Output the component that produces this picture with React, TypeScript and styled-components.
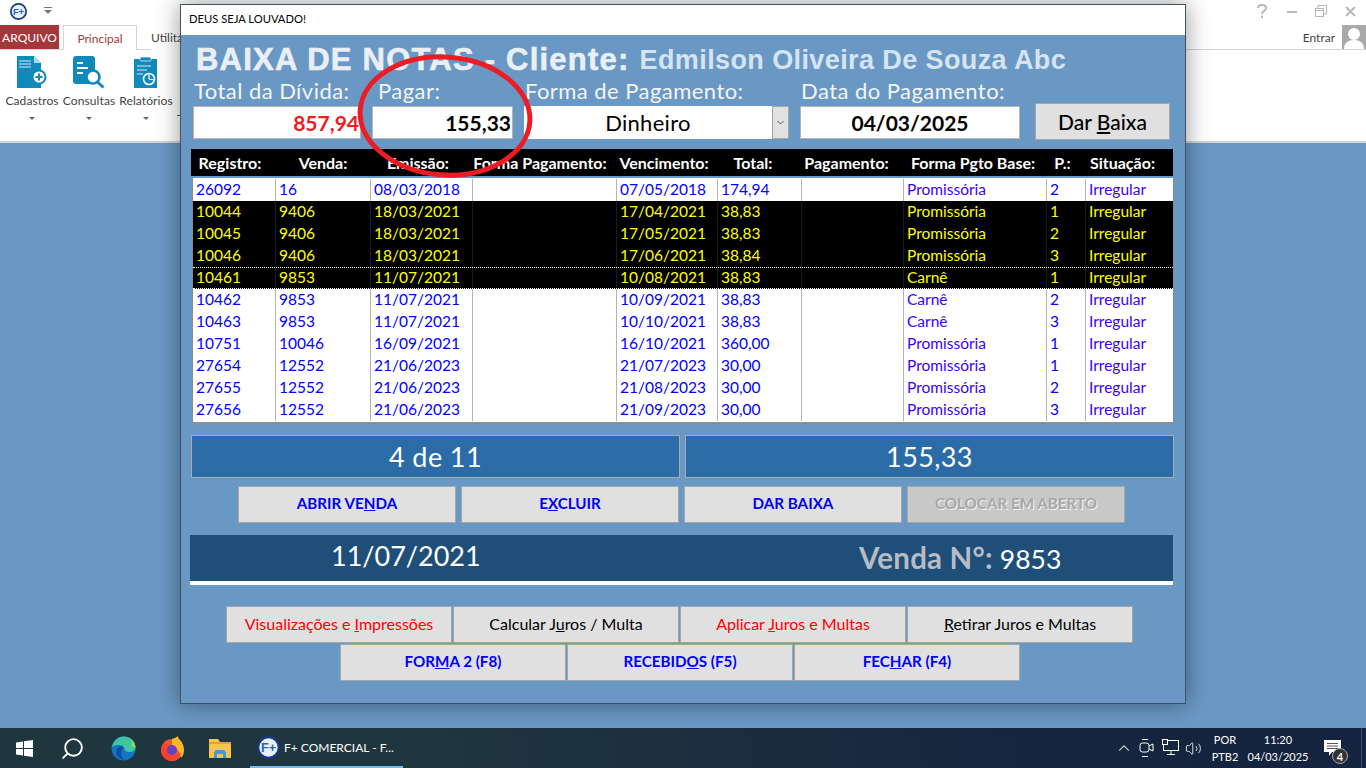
import React from 'react';
import styled, { createGlobalStyle } from 'styled-components';
import { ChevronUp, Search, Volume2 } from 'lucide-react';

const UI = '"Lato", "Open Sans", sans-serif';
const ARIAL = '"Liberation Sans", Arial, sans-serif';

const Global = createGlobalStyle`
	html, body {
		margin: 0;
		padding: 0;
		background: #6a98c4;
		font-family: ${UI};
	}
	* {
		box-sizing: border-box;
	}
`;

const Screen = styled.div`
	position: relative;
	width: 1366px;
	height: 768px;
	overflow: hidden;
	display: flex;
	flex-direction: column;
	background: #6a98c4;
`;

/* ---------- ribbon ---------- */

const Ribbon = styled.header`
	height: 143px;
	background: #fff;
	border-bottom: 2px solid #d4d4d4;
	display: flex;
	flex-direction: column;
`;

const QuickBar = styled.div`
	height: 25px;
	display: flex;
	align-items: center;
	padding: 0 6px 3px 10px;
	gap: 17px;
`;

const WindowGlyphs = styled.div`
	margin-left: auto;
	display: flex;
	align-items: center;
	gap: 18px;
	padding-right: 4px;
	color: #b8b8b8;
`;

const TabRow = styled.div`
	height: 25px;
	display: flex;
	border-bottom: 1px solid #d4d4d4;
`;

const FileTab = styled.div`
	width: 59px;
	background: #a4373a;
	color: #fff;
	font-size: 12px;
	display: flex;
	align-items: center;
	justify-content: center;
`;

const Tab = styled.div<{ $active?: boolean }>`
	width: ${({ $active }) => ($active ? '74px' : '60px')};
	height: 25px;
	margin-left: ${({ $active }) => ($active ? '4px' : '14px')};
	font-size: 12px;
	display: flex;
	align-items: center;
	justify-content: ${({ $active }) => ($active ? 'center' : 'flex-start')};
	color: ${({ $active }) => ($active ? '#a4373a' : '#444')};
	background: #fff;
	border: ${({ $active }) => ($active ? '1px solid #d4d4d4' : 'none')};
	border-bottom: none;
`;

const Account = styled.div`
	margin-left: auto;
	display: flex;
	align-items: center;
	gap: 7px;
	font-size: 12px;
	color: #444;
`;

const Avatar = styled.div`
	width: 24px;
	height: 24px;
	background: #a9a9a9;
`;

const Tools = styled.div`
	display: flex;
	padding: 5px 0 0 6px;
	gap: 5px;
`;

const Tool = styled.div`
	width: 52px;
	display: flex;
	flex-direction: column;
	align-items: center;
	font-size: 12px;
	letter-spacing: 0.1px;
	color: #444;
	white-space: nowrap;
`;

const ToolIcon = styled.div`
	height: 35px;
	display: flex;
	align-items: center;
	margin-bottom: 3px;
`;

const Caret = styled.span`
	width: 0;
	height: 0;
	margin-top: 9px;
	border-left: 3px solid transparent;
	border-right: 3px solid transparent;
	border-top: 3px solid #666;
`;

const SideTick = styled.span`
	width: 3px;
	height: 1px;
	margin-top: 60px;
	background: #555;
`;

/* ---------- desktop + taskbar ---------- */

const Desktop = styled.main`
	flex: 1;
`;

const Taskbar = styled.footer`
	height: 40px;
	display: flex;
	align-items: center;
	color: #fff;
	background: linear-gradient(90deg, #20363f 0%, #20363f 30%, #15263f 75%, #14233f 100%);
`;

const TaskSlot = styled.div<{ $w: number }>`
	width: ${({ $w }) => $w}px;
	height: 40px;
	display: flex;
	align-items: center;
	justify-content: center;
`;

const ActiveApp = styled.div`
	width: 153px;
	height: 40px;
	margin-left: 4px;
	display: flex;
	align-items: center;
	gap: 4px;
	padding-left: 7px;
	font-size: 12px;
	white-space: nowrap;
	border-bottom: 2px solid #76b9ed;
`;

const Tray = styled.div`
	margin-left: auto;
	display: flex;
	align-items: center;
	height: 40px;
	color: #fff;
`;

const TrayIcon = styled.div<{ $w: number }>`
	width: ${({ $w }) => $w}px;
	display: flex;
	justify-content: center;
`;

const TrayText = styled.div<{ $w: number; $pad?: number }>`
	width: ${({ $w }) => $w}px;
	padding-left: ${({ $pad }) => $pad || 0}px;
	display: flex;
	flex-direction: column;
	align-items: center;
	font-size: 11px;
	line-height: 17px;
`;

const Notify = styled.div`
	position: relative;
	width: 46px;
	height: 40px;
	padding-right: 12px;
	display: flex;
	align-items: center;
	justify-content: center;
	border-right: 1px solid #3b4a5c;
	margin-right: 4px;
`;

const Badge = styled.span`
	position: absolute;
	left: 16px;
	top: 20px;
	width: 16px;
	height: 16px;
	border-radius: 50%;
	background: #333;
	border: 1px solid #aaa;
	font-size: 11px;
	font-weight: 700;
	display: flex;
	align-items: center;
	justify-content: center;
`;

/* ---------- dialog ---------- */

const Dialog = styled.section`
	position: absolute;
	left: 180px;
	top: 4px;
	width: 1006px;
	height: 700px;
	display: flex;
	flex-direction: column;
	border: 1px solid #3f5266;
	background: #6a98c4;
	box-shadow: 0 0 22px rgba(0, 0, 0, 0.42);
`;

const TitleBar = styled.div`
	height: 30px;
	flex: none;
	background: #fff;
	color: #000;
	font-size: 11.2px;
	display: flex;
	align-items: center;
	padding: 0 0 3px 8px;
`;

const Body = styled.div`
	flex: 1;
	display: flex;
	flex-direction: column;
	align-items: stretch;
	padding: 0 12px 0 9px;
`;

const Heading = styled.div`
	height: 45px;
	padding: 5px 0 0 6px;
	display: flex;
	align-items: center;
	gap: 10px;
	font-family: ${ARIAL};
	font-weight: 700;
	white-space: nowrap;
`;

const HeadingMain = styled.span`
	font-size: 31px;
	letter-spacing: 1.22px;
	color: #eaeff6;
	-webkit-text-stroke: 0.6px #eaeff6;
`;

const HeadingClient = styled.span`
	font-size: 27px;
	letter-spacing: 0.4px;
	color: #d6e4f1;
`;

const FormRow = styled.div`
	height: 59px;
	display: flex;
	align-items: flex-end;
	padding-left: 3px;
`;

const Field = styled.div<{ $w: number; $gap: number }>`
	width: ${({ $w }) => $w}px;
	margin-right: ${({ $gap }) => $gap}px;
	display: flex;
	flex-direction: column;
`;

const FieldLabel = styled.label<{ $indent?: number }>`
	height: 26px;
	padding-left: ${({ $indent }) => $indent || 1}px;
	font-size: 22px;
	line-height: 22px;
	letter-spacing: 0.45px;
	color: #f2f5f8;
	white-space: nowrap;
`;

const TextBox = styled.div<{ $color?: string; $align?: string }>`
	height: 33px;
	padding: 0 1px;
	background: #fff;
	border: 1px solid #b5b5b5;
	display: flex;
	align-items: center;
	justify-content: ${({ $align }) => $align || 'flex-end'};
	font-size: 21px;
	font-weight: 700;
	color: ${({ $color }) => $color || '#000'};
`;

const ComboBox = styled.div`
	height: 33px;
	display: flex;
	background: #fff;
`;

const ComboValue = styled.div`
	flex: 1;
	display: flex;
	align-items: center;
	justify-content: center;
	font-size: 22px;
	letter-spacing: 0.3px;
	color: #000;
`;

const ComboArrow = styled.div`
	width: 17px;
	background: #e1e1e1;
	border: 1px solid #a6a6a6;
	display: flex;
	align-items: center;
	justify-content: center;
`;

const BaixaButton = styled.button`
	width: 135px;
	height: 37px;
	margin-bottom: -1px;
	background: #e0e0e0;
	border: 1px solid #a6a6a6;
	font-family: ${UI};
	font-size: 21px;
	font-weight: 500;
	color: #000;
	padding: 0;
`;

const COLUMNS = '83px 95px 102px 144px 101px 84px 102px 143px 39px 89px';

const HeaderRow = styled.div`
	height: 27px;
	margin-top: 10px;
	margin-left: 1px;
	background: #000;
	display: grid;
	grid-template-columns: 76px 110px 80px 164px 84px 94px 93px 160px 19px 101px;
	align-items: center;
	justify-items: center;
	padding-left: 1px;
`;

const HeaderCell = styled.div`
	font-size: 16px;
	font-weight: 700;
	color: #fff;
	white-space: nowrap;
`;

const Grid = styled.div`
	margin: 2px 0 0 2px;
	width: 982px;
	height: 246px;
	background: #fff;
	border-bottom: 2px solid #8f8f8f;
	border-right: 1px solid #8a8a8a;
	border-left: 1px solid #8a8a8a;
	padding-top: 1px;
`;

const Row = styled.div<{ $dark?: boolean; $current?: boolean }>`
	height: 22px;
	display: grid;
	grid-template-columns: ${COLUMNS};
	background: ${({ $dark }) => ($dark ? '#000' : '#fff')};
	border-top: ${({ $current }) => ($current ? '1px dotted #fff' : 'none')};
	border-bottom: ${({ $current }) => ($current ? '1px dotted #fff' : 'none')};
`;

const Cell = styled.div<{ $dark?: boolean; $violet?: boolean; $current?: boolean }>`
	padding-left: 3px;
	font-size: 15.5px;
	line-height: ${({ $current }) => ($current ? '18px' : '20px')};
	white-space: nowrap;
	color: ${({ $dark, $violet }) => ($dark ? '#ffff00' : $violet ? '#3a00ff' : '#0000ff')};
	border-right: 1px solid ${({ $dark }) => ($dark ? '#1c1c1c' : '#b5b5b5')};

	&:last-child {
		border-right: none;
	}
`;

const InfoRow = styled.div`
	margin-top: 11px;
	margin-left: 1px;
	display: grid;
	grid-template-columns: 489px 489px;
	gap: 5px;
`;

const InfoBox = styled.div`
	height: 43px;
	background: #2b6ca8;
	border: 1px solid #a3adb8;
	display: flex;
	align-items: center;
	justify-content: center;
	font-size: 27px;
	letter-spacing: 0.4px;
	color: #fff;
`;

const ButtonRow = styled.div<{ $top: number; $gap: number; $w: number; $nudge?: number }>`
	margin-top: ${({ $top }) => $top}px;
	padding-right: ${({ $nudge }) => $nudge || 0}px;
	display: grid;
	grid-template-columns: repeat(auto-fit, ${({ $w }) => $w}px);
	justify-content: center;
	gap: ${({ $gap }) => $gap}px;
`;

const ActionButton = styled.button<{ $tone?: 'blue' | 'red' | 'black'; $bold?: boolean; $disabled?: boolean }>`
	height: 37px;
	padding: 0 0 3px;
	border: 1px solid #a6a6a6;
	background: ${({ $disabled }) => ($disabled ? '#c8c8c8' : '#e0e0e0')};
	font-family: ${UI};
	font-size: ${({ $bold }) => ($bold ? '15.2px' : '16px')};
	font-weight: ${({ $bold }) => ($bold ? 700 : 400)};
	white-space: nowrap;
	color: ${({ $tone, $disabled }) =>
		$disabled ? '#a8a8a8' : $tone === 'red' ? '#ff0000' : $tone === 'black' ? '#000' : '#0000ff'};
	text-shadow: ${({ $disabled }) => ($disabled ? '1px 1px 0 #f2f2f2' : 'none')};
`;

const SaleBand = styled.div`
	height: 50px;
	margin-top: 12px;
	background: #1f4e79;
	border-bottom: 4px solid #fff;
	display: flex;
	align-items: center;
	color: #fff;
`;

const SaleDate = styled.div`
	width: 140px;
	margin-left: 141px;
	font-size: 27px;
	white-space: nowrap;
	margin-top: -5px;
`;

const SaleLabel = styled.div`
	margin-left: 388px;
	margin-top: -2px;
	font-size: 29.5px;
	font-weight: 700;
	letter-spacing: 0.2px;
	color: #b7bcc4;
	white-space: nowrap;
`;

const SaleNumber = styled.span`
	margin-left: 7px;
	font-size: 26.5px;
	font-weight: 400;
	letter-spacing: 0;
	color: #fff;
`;

const Mark = styled.svg`
	position: absolute;
	left: 350px;
	top: 48px;
	pointer-events: none;
`;

/* ---------- drawings ---------- */

const BLUE = '#1089bb';

const FPlusLogo = ({ size = 19 }: { size?: number }) => (
	<svg width={size} height={size} viewBox="0 0 20 20">
		<circle cx="10" cy="10" r="9" fill="#e8f0f8" stroke="#16397f" strokeWidth="2" />
		<text x="10" y="14" textAnchor="middle" fontFamily={ARIAL} fontWeight="700" fontSize="11" fill="#2a63b5">
			F+
		</text>
	</svg>
);

const CadastrosIcon = () => (
	<svg width="30" height="33" viewBox="0 0 30 33">
		<path d="M0 0h17l7 7v25H0z" fill={BLUE} />
		<path d="M17 0l7 7h-7z" fill="#a8dcef" />
		<path d="M2 5h12M2 8h12M2 11h12" stroke="#cfeaf5" strokeWidth="1.2" />
		<circle cx="22" cy="21" r="6.5" fill="#fff" stroke={BLUE} strokeWidth="2" />
		<path d="M22 17.5v7M18.5 21h7" stroke={BLUE} strokeWidth="2" />
	</svg>
);

const ConsultasIcon = () => (
	<svg width="32" height="33" viewBox="0 0 32 33">
		<rect x="0" y="0" width="22" height="28" rx="3" fill={BLUE} />
		<path d="M4 7h6M4 12h11M4 17h6" stroke="#fff" strokeWidth="2" />
		<circle cx="20" cy="21" r="6.5" fill="#fff" stroke={BLUE} strokeWidth="2.6" />
		<path d="M24.5 26l6 5.5" stroke={BLUE} strokeWidth="3" />
	</svg>
);

const RelatoriosIcon = () => (
	<svg width="24" height="33" viewBox="0 0 24 33">
		<rect x="0" y="3" width="23" height="29" fill={BLUE} />
		<rect x="6" y="1" width="11" height="4" rx="1.5" fill={BLUE} stroke="#fff" strokeWidth="0.7" />
		<path d="M3 10h14M3 14h10M3 18h6" stroke="#d6eef7" strokeWidth="1.2" />
		<circle cx="15" cy="23" r="5.5" fill="none" stroke="#fff" strokeWidth="1.6" />
		<path d="M15 23V18M15 23l5 1" stroke="#fff" strokeWidth="1.2" />
	</svg>
);

const AvatarGlyph = () => (
	<svg width="24" height="24" viewBox="0 0 24 24">
		<circle cx="12" cy="9" r="6" fill="#fff" />
		<path d="M2 24c0-6 4-9 10-9s10 3 10 9z" fill="#fff" />
	</svg>
);

const WindowsLogo = () => (
	<svg width="17" height="17" viewBox="0 0 17 17" fill="#fff">
		<path d="M0 2.4L7 1.4V8H0zM8 1.2L17 0V8H8zM0 9H7V15.6L0 14.6zM8 9H17V17L8 15.8z" />
	</svg>
);

const EdgeLogo = () => (
	<svg width="25" height="25" viewBox="0 0 25 25">
		<circle cx="12.5" cy="12.5" r="12" fill="#1373c4" />
		<path d="M1 11C3 3 9 .5 13 .5c6 0 11.500 4.500 11.500 11 0 3-3 4.500-6 4.500-3 0-5-1-5-2.500 0-4-5.500-6.500-12.500-2.500z" fill="#3fc6a0" />
		<path d="M24.500 12c0-5-3-8-6-9.500 2.500 2 3 5 1.500 7.500z" fill="#8ed84f" />
		<path d="M13 11c-5-2-9 2-7.500 7 1 3 4 5.500 8 5.500-3-2-4.500-6-3-9 .5-1.500 1.500-2.500 2.500-3.500z" fill="#0c4f9c" />
	</svg>
);

const FirefoxLogo = () => (
	<svg width="24" height="25" viewBox="0 0 24 25">
		<circle cx="12" cy="14" r="11" fill="#f0572f" />
		<path d="M12 3c3-1 5-2 6-3 0 2 1 3 3 5 2 3 3 6 3 9 0 3-1 6-3 8-1-6-4-11-9-12z" fill="#fbb72c" />
		<path d="M1 14c0-3 1-5 3-7l1 3c2-1 4-1 6 0-2 3-1 8 3 9 3 1 6-1 7-3-1 6-5 9-9 9-6 0-11-5-11-11z" fill="#f4442e" />
		<circle cx="12" cy="14" r="5" fill="#6a3fc2" />
	</svg>
);

const FolderLogo = () => (
	<svg width="22" height="19" viewBox="0 0 22 19">
		<path d="M0 0h9l2 3h11v16H0z" fill="#f5c451" />
		<path d="M0 3h22v2H0z" fill="#dba73a" />
		<path d="M6 11h10v2h1v6h-3v-4H8v4H5v-6h1z" fill="#3f9bdc" />
	</svg>
);

const MeetGlyph = () => (
	<svg width="16" height="20" viewBox="0 0 16 20" fill="none" stroke="#fff" strokeWidth="1">
		<path d="M3 1.500h6M3 18.500h6" />
		<rect x="1" y="5" width="9" height="9" rx="2.500" />
		<path d="M10 8l4-2v7l-4-2" />
	</svg>
);

const NetworkGlyph = () => (
	<svg width="18" height="18" viewBox="0 0 18 18" fill="none" stroke="#fff" strokeWidth="1">
		<rect x="1.500" y="1.500" width="15" height="10" />
		<path d="M9 12v3M5 15.500h8" />
		<rect x="0.500" y="0.500" width="5" height="5" fill="#1a2c3f" />
	</svg>
);

const NotifyGlyph = () => (
	<svg width="20" height="20" viewBox="0 0 20 20">
		<path d="M1 2h17v12H9l-3 4v-4H1z" fill="#fff" />
		<path d="M4 5.500h11M4 8h11M4 10.500h11" stroke="#555" strokeWidth="1" />
	</svg>
);

/* ---------- data ---------- */

type Entry = [string, string, string, string, string, string, string, string];

const ENTRIES: Entry[] = [
	['26092', '16', '08/03/2018', '07/05/2018', '174,94', 'Promissória', '2', 'Irregular'],
	['10044', '9406', '18/03/2021', '17/04/2021', '38,83', 'Promissória', '1', 'Irregular'],
	['10045', '9406', '18/03/2021', '17/05/2021', '38,83', 'Promissória', '2', 'Irregular'],
	['10046', '9406', '18/03/2021', '17/06/2021', '38,84', 'Promissória', '3', 'Irregular'],
	['10461', '9853', '11/07/2021', '10/08/2021', '38,83', 'Carnê', '1', 'Irregular'],
	['10462', '9853', '11/07/2021', '10/09/2021', '38,83', 'Carnê', '2', 'Irregular'],
	['10463', '9853', '11/07/2021', '10/10/2021', '38,83', 'Carnê', '3', 'Irregular'],
	['10751', '10046', '16/09/2021', '16/10/2021', '360,00', 'Promissória', '1', 'Irregular'],
	['27654', '12552', '21/06/2023', '21/07/2023', '30,00', 'Promissória', '1', 'Irregular'],
	['27655', '12552', '21/06/2023', '21/08/2023', '30,00', 'Promissória', '2', 'Irregular'],
	['27656', '12552', '21/06/2023', '21/09/2023', '30,00', 'Promissória', '3', 'Irregular'],
];

const HEADERS = [
	'Registro:',
	'Venda:',
	'Emissão:',
	'Forma Pagamento:',
	'Vencimento:',
	'Total:',
	'Pagamento:',
	'Forma Pgto Base:',
	'P.:',
	'Situação:',
];

const App = () => (
	<Screen>
		<Global />
		<Ribbon>
			<QuickBar>
				<FPlusLogo size={17} />
				<svg width="8" height="8" viewBox="0 0 8 8" fill="#777">
					<path d="M0 0h8v1H0zM0 3h8L4 7z" />
				</svg>
				<WindowGlyphs>
					<svg width="14" height="14" viewBox="0 0 14 14" fill="none" stroke="#b8b8b8" strokeWidth="2">
						<path d="M3 4c0-4 8-4 8 0 0 3-4 3-4 6" />
						<path d="M7 11.500v2.500" />
					</svg>
					<svg width="10" height="10" viewBox="0 0 10 10" fill="#b8b8b8">
						<rect y="5" width="10" height="2" />
					</svg>
					<svg width="12" height="12" viewBox="0 0 12 12" fill="none" stroke="#b8b8b8">
						<rect x="0.500" y="3.500" width="8" height="8" />
						<path d="M3 3V.500h8.500V9H9" />
						<path d="M0 5.500h9" />
					</svg>
					<svg width="11" height="11" viewBox="0 0 11 11" stroke="#b8b8b8" strokeWidth="2">
						<path d="M1 1l9 9M10 1l-9 9" />
					</svg>
				</WindowGlyphs>
			</QuickBar>
			<TabRow>
				<FileTab>ARQUIVO</FileTab>
				<Tab $active>Principal</Tab>
				<Tab>Utilitários</Tab>
				<Account>
					Entrar
					<Avatar>
						<AvatarGlyph />
					</Avatar>
				</Account>
			</TabRow>
			<Tools>
				<Tool>
					<ToolIcon>
						<CadastrosIcon />
					</ToolIcon>
					Cadastros
					<Caret />
				</Tool>
				<Tool>
					<ToolIcon>
						<ConsultasIcon />
					</ToolIcon>
					Consultas
					<Caret />
				</Tool>
				<Tool>
					<ToolIcon>
						<RelatoriosIcon />
					</ToolIcon>
					Relatórios
					<Caret />
				</Tool>
				<SideTick />
			</Tools>
		</Ribbon>

		<Desktop />

		<Taskbar>
			<TaskSlot $w={48}>
				<WindowsLogo />
			</TaskSlot>
			<TaskSlot $w={48}>
				<Search size={25} color="#fff" strokeWidth={1.8} style={{ transform: 'scaleX(-1)' }} />
			</TaskSlot>
			<TaskSlot $w={54}>
				<EdgeLogo />
			</TaskSlot>
			<TaskSlot $w={44}>
				<FirefoxLogo />
			</TaskSlot>
			<TaskSlot $w={52}>
				<FolderLogo />
			</TaskSlot>
			<ActiveApp>
				<FPlusLogo size={23} />
				F+ COMERCIAL - F...
			</ActiveApp>
			<Tray>
				<TrayIcon $w={20}>
					<ChevronUp size={18} strokeWidth={1.4} />
				</TrayIcon>
				<TrayIcon $w={25}>
					<MeetGlyph />
				</TrayIcon>
				<TrayIcon $w={24}>
					<NetworkGlyph />
				</TrayIcon>
				<TrayIcon $w={20}>
					<Volume2 size={17} strokeWidth={1.2} />
				</TrayIcon>
				<TrayText $w={37} $pad={7}>
					<span>POR</span>
					<span>PTB2</span>
				</TrayText>
				<TrayText $w={76}>
					<span>11:20</span>
					<span>04/03/2025</span>
				</TrayText>
				<Notify>
					<NotifyGlyph />
					<Badge>4</Badge>
				</Notify>
			</Tray>
		</Taskbar>

		<Dialog>
			<TitleBar>DEUS SEJA LOUVADO!</TitleBar>
			<Body>
				<Heading>
					<HeadingMain>BAIXA DE NOTAS - Cliente:</HeadingMain>
					<HeadingClient>Edmilson Oliveira De Souza Abc</HeadingClient>
				</Heading>
				<FormRow>
					<Field $w={168} $gap={11}>
						<FieldLabel>Total da Dívida:</FieldLabel>
						<TextBox $color="#ed1c24">857,94</TextBox>
					</Field>
					<Field $w={141} $gap={11}>
						<FieldLabel $indent={6}>Pagar:</FieldLabel>
						<TextBox>155,33</TextBox>
					</Field>
					<Field $w={265} $gap={11}>
						<FieldLabel>Forma de Pagamento:</FieldLabel>
						<ComboBox>
							<ComboValue>Dinheiro</ComboValue>
							<ComboArrow>
								<svg width="7" height="5" viewBox="0 0 7 5" fill="none" stroke="#555">
									<path d="M.5 1l3 3 3-3" />
								</svg>
							</ComboArrow>
						</ComboBox>
					</Field>
					<Field $w={220} $gap={15}>
						<FieldLabel>Data do Pagamento:</FieldLabel>
						<TextBox $align="center">04/03/2025</TextBox>
					</Field>
					<BaixaButton>
						Dar <u>B</u>aixa
					</BaixaButton>
				</FormRow>

				<HeaderRow>
					{HEADERS.map((h) => (
						<HeaderCell key={h}>{h}</HeaderCell>
					))}
				</HeaderRow>
				<Grid>
					{ENTRIES.map(([reg, venda, emissao, venc, total, base, parc, sit], i) => {
						const dark = i >= 1 && i <= 4;
						const current = i === 4;
						const props = { $dark: dark, $current: current };
						return (
							<Row key={reg} $dark={dark} $current={current}>
								<Cell {...props}>{reg}</Cell>
								<Cell {...props}>{venda}</Cell>
								<Cell {...props}>{emissao}</Cell>
								<Cell {...props} />
								<Cell {...props}>{venc}</Cell>
								<Cell {...props}>{total}</Cell>
								<Cell {...props} />
								<Cell {...props} $violet>
									{base}
								</Cell>
								<Cell {...props}>{parc}</Cell>
								<Cell {...props} $violet>
									{sit}
								</Cell>
							</Row>
						);
					})}
				</Grid>

				<InfoRow>
					<InfoBox>4 de 11</InfoBox>
					<InfoBox>155,33</InfoBox>
				</InfoRow>

				<ButtonRow $top={8} $gap={5} $w={218}>
					<ActionButton $bold>
						ABRIR VE<u>N</u>DA
					</ActionButton>
					<ActionButton $bold>
						E<u>X</u>CLUIR
					</ActionButton>
					<ActionButton $bold>DAR BAIXA</ActionButton>
					<ActionButton $bold $disabled>
						COLOCAR EM ABERTO
					</ActionButton>
				</ButtonRow>

				<SaleBand>
					<SaleDate>11/07/2021</SaleDate>
					<SaleLabel>
						Venda N°:
						<SaleNumber>9853</SaleNumber>
					</SaleLabel>
				</SaleBand>

				<ButtonRow $top={21} $gap={1} $w={226} $nudge={4}>
					<ActionButton $tone="red">
						Visualizações e <u>I</u>mpressões
					</ActionButton>
					<ActionButton $tone="black">
						Calcular J<u>u</u>ros / Multa
					</ActionButton>
					<ActionButton $tone="red">
						Aplicar <u>J</u>uros e Multas
					</ActionButton>
					<ActionButton $tone="black">
						<u>R</u>etirar Juros e Multas
					</ActionButton>
				</ButtonRow>
				<ButtonRow $top={1} $gap={1} $w={226} $nudge={3}>
					<ActionButton $bold>
						FOR<u>M</u>A 2 (F8)
					</ActionButton>
					<ActionButton $bold>
						RECEBID<u>O</u>S (F5)
					</ActionButton>
					<ActionButton $bold>
						FEC<u>H</u>AR (F4)
					</ActionButton>
				</ButtonRow>
			</Body>
		</Dialog>

		<Mark width="190" height="135" viewBox="0 0 190 135" fill="none">
			<ellipse cx="95" cy="68" rx="85" ry="59" stroke="#ed1c24" strokeWidth="5" transform="rotate(4 95 68)" />
		</Mark>
	</Screen>
);

export default App;
